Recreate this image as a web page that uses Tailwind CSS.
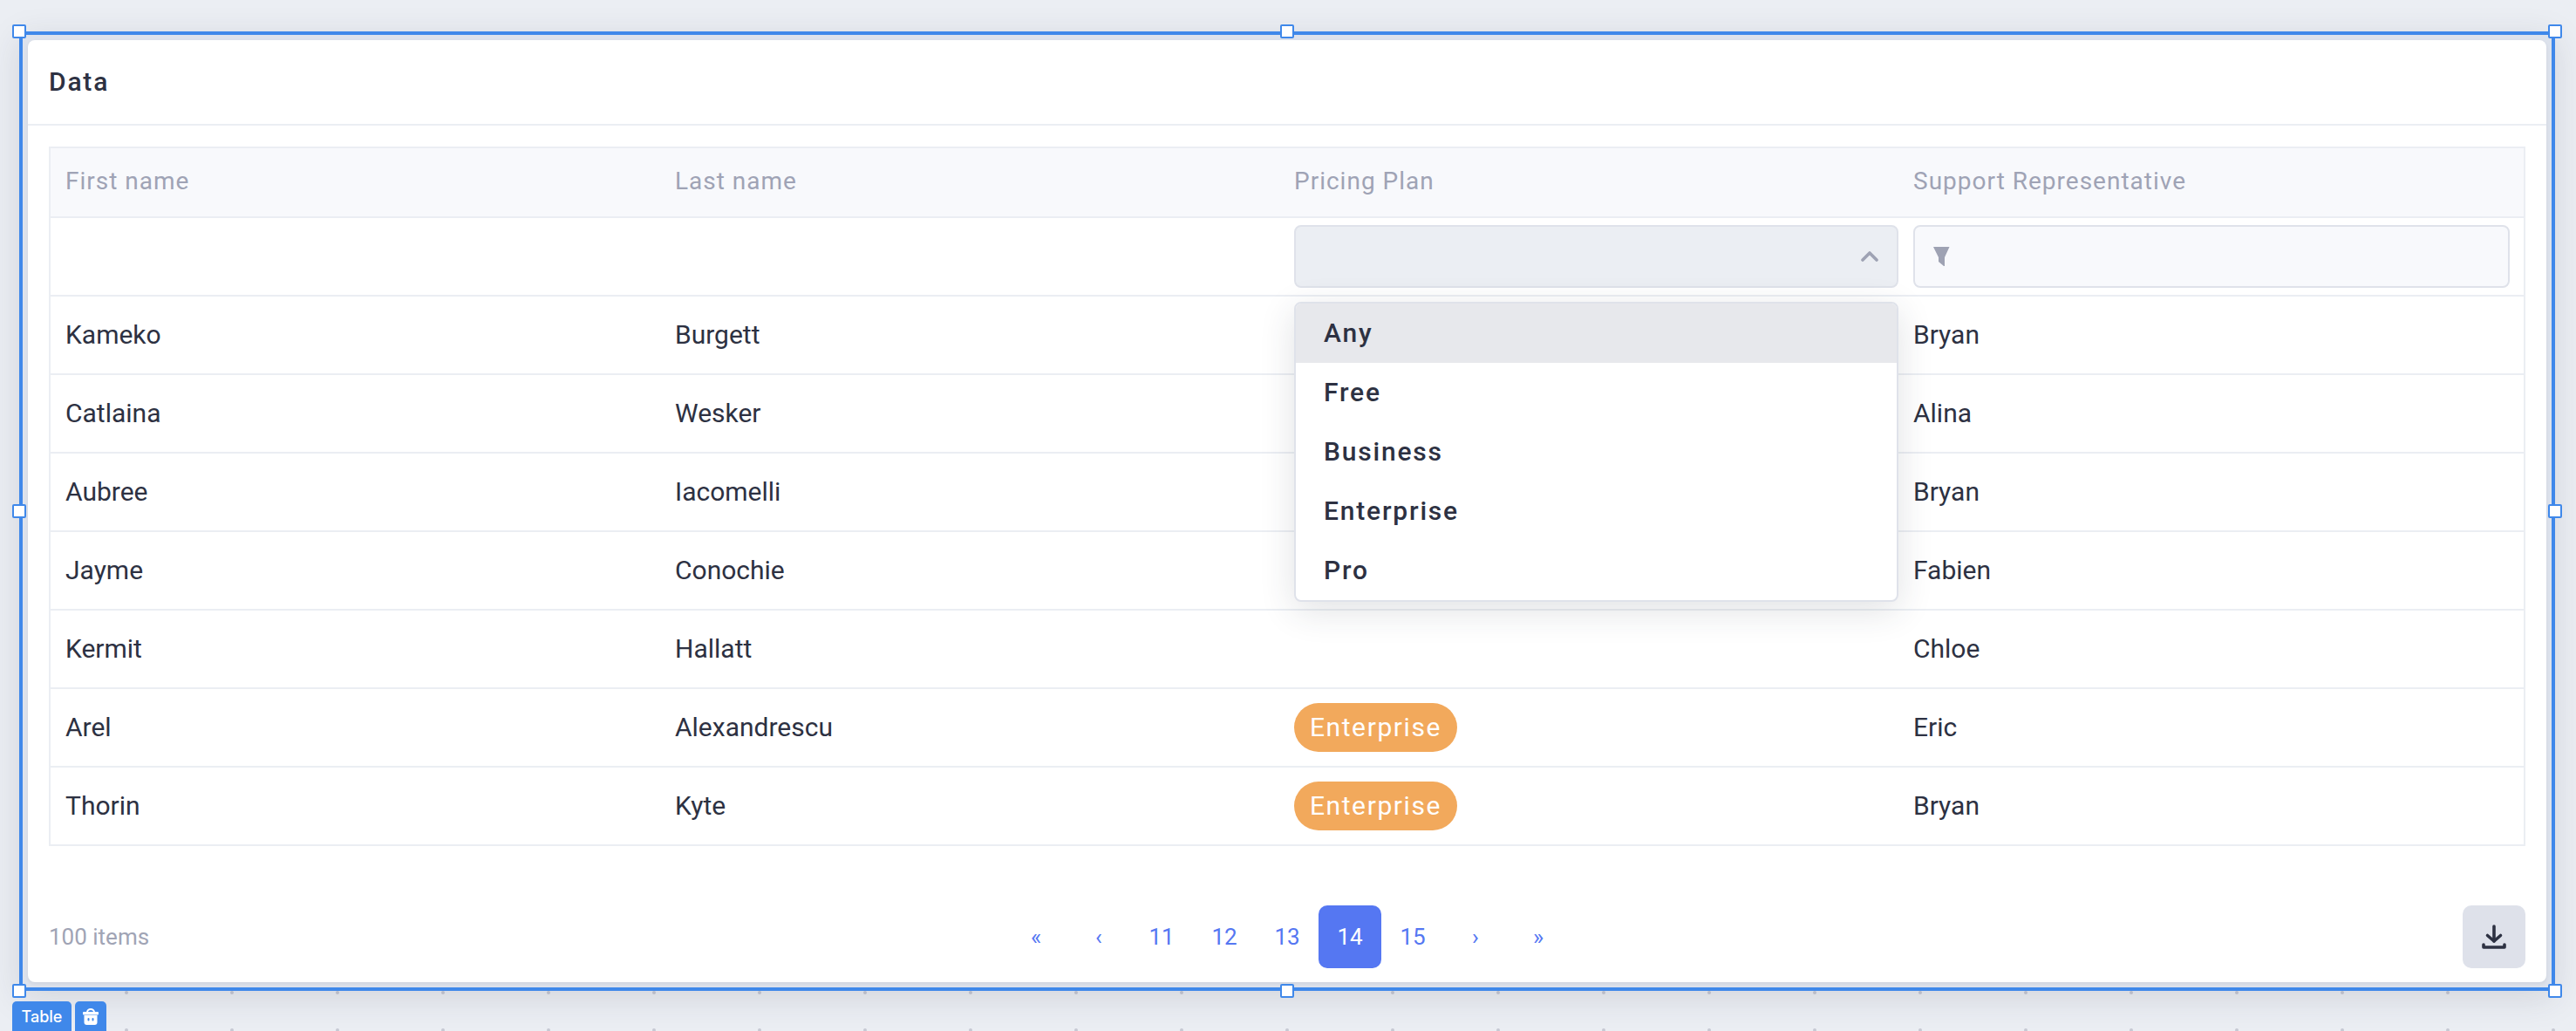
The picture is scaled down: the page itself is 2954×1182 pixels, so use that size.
<!DOCTYPE html>
<html lang="en">
  <head>
    <meta charset="UTF-8">
    <title>Table editor</title>
    <script src="https://cdn.jsdelivr.net/npm/@tailwindcss/browser@4"></script>
  </head>
  <body class="relative w-[2954px] h-[1182px] overflow-hidden bg-[#ebeef3] font-[Roboto,sans-serif] text-[30px] text-[#2d3142]">
    <!-- canvas grid dots -->
    <svg class="absolute left-0 top-[1130px]" width="2954" height="52">
      <defs>
        <pattern id="dots" x="84" y="0" width="121" height="43" patternUnits="userSpaceOnUse">
          <circle cx="61" cy="8" r="2" fill="#c6c9d3"></circle>
        </pattern>
      </defs>
      <rect x="84" y="0" width="2870" height="52" fill="url(#dots)"></rect>
    </svg>

    <!-- selected table widget -->
    <div class="absolute left-[22px] top-[36px] w-[2908px] h-[1100px] border-4 border-[#3f88ea] bg-[#dde2ec] p-[6px] shadow-[0_8px_36px_rgba(45,49,66,0.13)]">
      <div class="flex h-full flex-col rounded-lg bg-white shadow-[0_2px_4px_rgba(45,49,66,0.08)]">
        <div class="flex h-[98px] shrink-0 items-center border-b-2 border-[#ebeef3] px-[24px] pb-[1px] font-medium tracking-[1.8px]">Data</div>

        <div class="mx-6 mt-6 border-x-2 border-t-2 border-[#ebeef3]">
          <table class="w-full table-fixed border-separate border-spacing-0 text-left">
            <colgroup>
              <col class="w-[700px]">
              <col class="w-[711px]">
              <col class="w-[710px]">
              <col class="w-[715px]">
            </colgroup>
            <thead>
              <tr class="h-[80px] bg-[#f8f9fc] text-[28px] text-[#9fa3b5] tracking-[1px]">
                <th class="border-b-2 border-[#ebeef3] pb-[2px] pl-[17px] font-normal">First name</th>
                <th class="border-b-2 border-[#ebeef3] pb-[2px] pl-[16px] font-normal">Last name</th>
                <th class="border-b-2 border-[#ebeef3] pb-[2px] pl-[15px] font-normal">Pricing Plan</th>
                <th class="border-b-2 border-[#ebeef3] pb-[2px] pl-[15px] font-normal">Support Representative</th>
              </tr>
            </thead>
            <tbody>
              <tr class="h-[90px]">
                <td class="border-b-2 border-[#ebeef3]"></td>
                <td class="border-b-2 border-[#ebeef3]"></td>
                <td class="border-b-2 border-[#ebeef3] pl-[15px] pr-[2px]">
                  <div class="relative">
                    <div class="flex h-[72px] items-center justify-end rounded-lg border-2 border-[#dfe2ea] bg-[#ebeef3] pr-[21px]">
                      <svg width="20" height="12" viewBox="0 0 20 12" fill="none" stroke="#9ea2b3" stroke-width="3.6" stroke-linecap="round" stroke-linejoin="round"><path d="M2 10l8-8 8 8"></path></svg>
                    </div>
                    <ul class="absolute left-0 right-0 top-[88px] z-10 overflow-hidden rounded-lg border-2 border-[#dfe2ea] bg-white font-medium tracking-[1.8px] shadow-[0_10px_40px_rgba(45,49,66,0.14)]">
                      <li class="flex h-[68px] items-center bg-[#e7e8ec] pb-[1px] pl-[32px]">Any</li>
                      <li class="flex h-[68px] items-center pb-[1px] pl-[32px]">Free</li>
                      <li class="flex h-[68px] items-center pb-[1px] pl-[32px]">Business</li>
                      <li class="flex h-[68px] items-center pb-[1px] pl-[32px]">Enterprise</li>
                      <li class="flex h-[68px] items-center pb-[1px] pl-[32px]">Pro</li>
                    </ul>
                  </div>
                </td>
                <td class="border-b-2 border-[#ebeef3] pl-[15px] pr-[16px]">
                  <div class="flex h-[72px] items-center rounded-lg border-2 border-[#dfe2ea] bg-[#f8f9fc] pl-[21px]">
                    <svg width="19" height="22" viewBox="0 0 19 22" fill="#9ea2b3"><path d="M0 0H18.500L13 12V22H12L6 17V12Z"></path></svg>
                  </div>
                </td>
              </tr>
              <tr class="h-[90px]"><td class="border-b-2 border-[#ebeef3] pb-[2px] pl-[17px]">Kameko</td><td class="border-b-2 border-[#ebeef3] pb-[2px] pl-[16px]">Burgett</td><td class="border-b-2 border-[#ebeef3]"></td><td class="border-b-2 border-[#ebeef3] pb-[2px] pl-[15px]">Bryan</td></tr>
              <tr class="h-[90px]"><td class="border-b-2 border-[#ebeef3] pb-[2px] pl-[17px]">Catlaina</td><td class="border-b-2 border-[#ebeef3] pb-[2px] pl-[16px]">Wesker</td><td class="border-b-2 border-[#ebeef3]"></td><td class="border-b-2 border-[#ebeef3] pb-[2px] pl-[15px]">Alina</td></tr>
              <tr class="h-[90px]"><td class="border-b-2 border-[#ebeef3] pb-[2px] pl-[17px]">Aubree</td><td class="border-b-2 border-[#ebeef3] pb-[2px] pl-[16px]">Iacomelli</td><td class="border-b-2 border-[#ebeef3]"></td><td class="border-b-2 border-[#ebeef3] pb-[2px] pl-[15px]">Bryan</td></tr>
              <tr class="h-[90px]"><td class="border-b-2 border-[#ebeef3] pb-[2px] pl-[17px]">Jayme</td><td class="border-b-2 border-[#ebeef3] pb-[2px] pl-[16px]">Conochie</td><td class="border-b-2 border-[#ebeef3]"></td><td class="border-b-2 border-[#ebeef3] pb-[2px] pl-[15px]">Fabien</td></tr>
              <tr class="h-[90px]"><td class="border-b-2 border-[#ebeef3] pb-[2px] pl-[17px]">Kermit</td><td class="border-b-2 border-[#ebeef3] pb-[2px] pl-[16px]">Hallatt</td><td class="border-b-2 border-[#ebeef3]"></td><td class="border-b-2 border-[#ebeef3] pb-[2px] pl-[15px]">Chloe</td></tr>
              <tr class="h-[90px]"><td class="border-b-2 border-[#ebeef3] pb-[2px] pl-[17px]">Arel</td><td class="border-b-2 border-[#ebeef3] pb-[2px] pl-[16px]">Alexandrescu</td><td class="border-b-2 border-[#ebeef3] pl-[15px]"><span class="flex h-[56px] w-[187px] items-center justify-center rounded-[28px] bg-[#f2a95c] pb-[2px] tracking-[1.6px] text-white">Enterprise</span></td><td class="border-b-2 border-[#ebeef3] pb-[2px] pl-[15px]">Eric</td></tr>
              <tr class="h-[90px]"><td class="border-b-2 border-[#ebeef3] pb-[2px] pl-[17px]">Thorin</td><td class="border-b-2 border-[#ebeef3] pb-[2px] pl-[16px]">Kyte</td><td class="border-b-2 border-[#ebeef3] pl-[15px]"><span class="flex h-[56px] w-[187px] items-center justify-center rounded-[28px] bg-[#f2a95c] pb-[2px] tracking-[1.6px] text-white">Enterprise</span></td><td class="border-b-2 border-[#ebeef3] pb-[2px] pl-[15px]">Bryan</td></tr>
            </tbody>
          </table>
        </div>

        <div class="mt-auto mb-4 grid grid-cols-[1fr_auto_1fr] items-center px-6">
          <span class="text-[26px] text-[#a0a4b5]">100 items</span>
          <div class="flex text-[26px] text-[#5577f2]">
            <a class="flex size-[72px] items-center justify-center">«</a>
            <a class="flex size-[72px] items-center justify-center">‹</a>
            <a class="flex size-[72px] items-center justify-center">11</a>
            <a class="flex size-[72px] items-center justify-center">12</a>
            <a class="flex size-[72px] items-center justify-center">13</a>
            <a class="flex size-[72px] items-center justify-center rounded-[10px] bg-[#5577f2] text-white">14</a>
            <a class="flex size-[72px] items-center justify-center">15</a>
            <a class="flex size-[72px] items-center justify-center">›</a>
            <a class="flex size-[72px] items-center justify-center">»</a>
          </div>
          <button class="flex size-[72px] items-center justify-center justify-self-end rounded-[10px] bg-[#dee1ea]">
            <svg width="28" height="29" viewBox="0 0 28 29" fill="none" stroke="#2d3142" stroke-width="3.6" stroke-linecap="round" stroke-linejoin="round"><path d="M14 2v17"></path><path d="M6.500 12.500L14 19l7.500-6.500"></path><path d="M2 23v3h24v-3"></path></svg>
          </button>
        </div>
      </div>
    </div>

    <!-- resize handles -->
    <span class="absolute left-[14px] top-[28px] size-4 rounded-[2px] border-2 border-[#3f88ea] bg-white"></span>
    <span class="absolute left-[1468px] top-[28px] size-4 rounded-[2px] border-2 border-[#3f88ea] bg-white"></span>
    <span class="absolute left-[2922px] top-[28px] size-4 rounded-[2px] border-2 border-[#3f88ea] bg-white"></span>
    <span class="absolute left-[14px] top-[578px] size-4 rounded-[2px] border-2 border-[#3f88ea] bg-white"></span>
    <span class="absolute left-[2922px] top-[578px] size-4 rounded-[2px] border-2 border-[#3f88ea] bg-white"></span>
    <span class="absolute left-[14px] top-[1128px] size-4 rounded-[2px] border-2 border-[#3f88ea] bg-white"></span>
    <span class="absolute left-[1468px] top-[1128px] size-4 rounded-[2px] border-2 border-[#3f88ea] bg-white"></span>
    <span class="absolute left-[2922px] top-[1128px] size-4 rounded-[2px] border-2 border-[#3f88ea] bg-white"></span>

    <!-- widget tag -->
    <div class="absolute left-[14px] top-[1148px] flex gap-1">
      <div class="flex h-[40px] w-[68px] items-start justify-center rounded-t-[5px] bg-[#3f88ea] pt-[4px] font-[Inter,sans-serif] text-[18px] font-medium text-white">Table</div>
      <div class="flex h-[40px] w-[36px] items-start justify-center rounded-t-[5px] bg-[#3f88ea] pt-[8px]">
        <svg width="18" height="19" viewBox="0 0 18 19"><path d="M5 4.500a4 3.500 0 018 0" fill="none" stroke="#ffffff" stroke-width="2"></path><rect x="0" y="4" width="18" height="3.500" rx="1" fill="#ffffff"></rect><path d="M1.500 8h15v8a3 3 0 01-3 3h-9a3 3 0 01-3-3z" fill="#ffffff"></path><rect x="5.500" y="11" width="2" height="3.500" rx="1" fill="#3f88ea"></rect><rect x="10.500" y="11" width="2" height="3.500" rx="1" fill="#3f88ea"></rect></svg>
      </div>
    </div>
  </body>
</html>
